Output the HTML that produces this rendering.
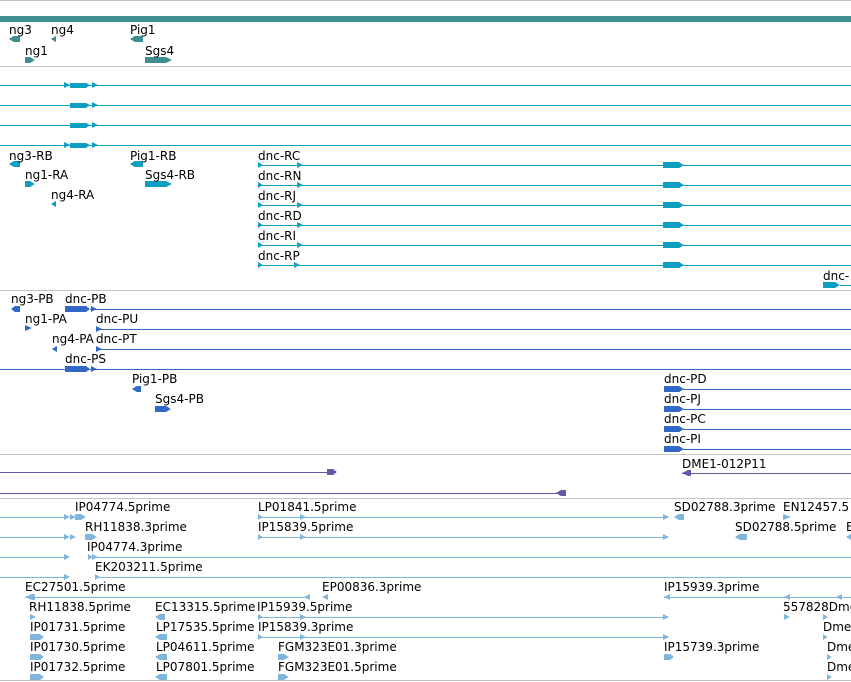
<!DOCTYPE html>
<html><head><meta charset="utf-8"><style>
html,body{margin:0;padding:0;background:#fff;width:851px;height:682px;overflow:hidden}
svg text{font-family:"DejaVu Sans","Liberation Sans",sans-serif;font-size:12px;fill:#000}
</style></head><body>
<svg width="851" height="682" viewBox="0 0 851 682" xmlns="http://www.w3.org/2000/svg" shape-rendering="crispEdges">
<g fill="#c4c4c4">
<rect x="0" y="0" width="851" height="1"/>
<rect x="0" y="66" width="851" height="1"/>
<rect x="0" y="290" width="851" height="1"/>
<rect x="0" y="454" width="851" height="1"/>
<rect x="0" y="498" width="851" height="1"/>
<rect x="0" y="680" width="851" height="1"/>
</g>
<rect x="0" y="16" width="851" height="6" fill="#3f8f90"/>

<g fill="#3f8e8f">
<polygon points="9,39 14,36 20,36 20,42 14,42"/>
<polygon points="51,39 56,36 56,42"/>
<polygon points="130,39 135,36 143,36 143,42 135,42"/>
<polygon points="25,57 30,57 35,60 30,63 25,63"/>
<polygon points="145,57 166,57 172,60 166,63 145,63"/>
</g>
<text x="9" y="34">ng3</text><text x="51" y="34">ng4</text><text x="130" y="34">Pig1</text>
<text x="25" y="55">ng1</text><text x="145" y="55">Sgs4</text>

<g fill="#0d9fc1">
<rect x="0" y="85" width="851" height="1"/><rect x="0" y="105" width="851" height="1"/>
<rect x="0" y="125" width="851" height="1"/><rect x="0" y="145" width="851" height="1"/>
<polygon points="64,82 70,85 64,88"/><polygon points="64,142 70,145 64,148"/>
<polygon points="70,83 86,83 90,85 86,88 70,88"/><polygon points="70,103 86,103 90,105 86,108 70,108"/>
<polygon points="70,123 86,123 90,125 86,128 70,128"/><polygon points="70,143 86,143 90,145 86,148 70,148"/>
<polygon points="92,82 98,85 92,88"/><polygon points="92,102 98,105 92,108"/>
<polygon points="92,122 98,125 92,128"/><polygon points="92,142 98,145 92,148"/>
<polygon points="9,164 14,161 20,161 20,167 14,167"/>
<polygon points="130,164 135,161 143,161 143,167 135,167"/>
<polygon points="25,181 30,181 35,184 30,187 25,187"/>
<polygon points="145,181 166,181 172,184 166,187 145,187"/>
<polygon points="51,204 56,201 56,207"/>
<rect x="258" y="165" width="593" height="1"/><rect x="258" y="185" width="593" height="1"/>
<rect x="258" y="205" width="593" height="1"/><rect x="258" y="225" width="593" height="1"/>
<rect x="258" y="245" width="593" height="1"/><rect x="258" y="265" width="593" height="1"/>
<polygon points="258,162 263,165 258,168"/><polygon points="297,162 303,165 297,168"/>
<polygon points="258,182 263,185 258,188"/><polygon points="297,182 303,185 297,188"/>
<polygon points="258,202 263,205 258,208"/><polygon points="297,202 303,205 297,208"/>
<polygon points="258,222 263,225 258,228"/><polygon points="297,222 303,225 297,228"/>
<polygon points="258,242 263,245 258,248"/><polygon points="297,242 303,245 297,248"/>
<polygon points="258,262 263,265 258,268"/><polygon points="294,262 300,265 294,268"/>
<polygon points="663,162 679,162 684,165 679,168 663,168"/><polygon points="663,182 679,182 684,185 679,188 663,188"/>
<polygon points="663,202 679,202 684,205 679,208 663,208"/><polygon points="663,222 679,222 684,225 679,228 663,228"/>
<polygon points="663,242 679,242 684,245 679,248 663,248"/><polygon points="663,262 679,262 684,265 679,268 663,268"/>
<polygon points="823,282 835,282 840,285 835,288 823,288"/><rect x="840" y="285" width="11" height="1"/>
</g>
<text x="9" y="160">ng3-RB</text><text x="130" y="160">Pig1-RB</text><text x="25" y="179">ng1-RA</text>
<text x="145" y="179">Sgs4-RB</text><text x="51" y="199">ng4-RA</text>
<text x="258" y="160">dnc-RC</text><text x="258" y="180">dnc-RN</text><text x="258" y="200">dnc-RJ</text>
<text x="258" y="220">dnc-RD</text><text x="258" y="240">dnc-RI</text><text x="258" y="260">dnc-RP</text>
<text x="823" y="280">dnc-</text>

<g fill="#3168c8">
<polygon points="11,309 15,306 20,306 20,312 15,312"/>
<polygon points="65,306 86,306 90,309 86,312 65,312"/><polygon points="91,306 97,309 91,312"/>
<rect x="90" y="309" width="761" height="1"/>
<polygon points="25,325 32,328 25,331"/>
<polygon points="96,326 102,329 96,332"/><rect x="96" y="329" width="755" height="1"/>
<polygon points="52,349 57,346 57,352"/>
<polygon points="96,346 102,349 96,352"/><rect x="96" y="349" width="755" height="1"/>
<polygon points="65,366 86,366 90,369 86,372 65,372"/><polygon points="91,366 97,369 91,372"/>
<rect x="0" y="369" width="851" height="1"/>
<polygon points="132,389 137,386 141,386 141,392 137,392"/>
<polygon points="155,406 166,406 171,409 166,412 155,412"/>
<polygon points="664,386 679,386 684,389 679,392 664,392"/><rect x="683" y="389" width="168" height="1"/>
<polygon points="664,406 679,406 684,409 679,412 664,412"/><rect x="683" y="409" width="168" height="1"/>
<polygon points="664,426 679,426 684,429 679,432 664,432"/><rect x="683" y="429" width="168" height="1"/>
<polygon points="664,446 679,446 684,449 679,452 664,452"/><rect x="683" y="449" width="168" height="1"/>
</g>
<text x="11" y="303">ng3-PB</text><text x="65" y="303">dnc-PB</text><text x="25" y="323">ng1-PA</text>
<text x="96" y="323">dnc-PU</text><text x="52" y="343">ng4-PA</text><text x="96" y="343">dnc-PT</text>
<text x="65" y="363">dnc-PS</text><text x="132" y="383">Pig1-PB</text><text x="155" y="403">Sgs4-PB</text>
<text x="664" y="383">dnc-PD</text><text x="664" y="403">dnc-PJ</text><text x="664" y="423">dnc-PC</text><text x="664" y="443">dnc-PI</text>

<g fill="#6b55a5">
<rect x="0" y="472" width="330" height="1"/><polygon points="327,469 333,469 337,472 333,475 327,475"/>
<rect x="0" y="493" width="565" height="1"/><polygon points="556,493 561,490 566,490 566,496 561,496"/>
<rect x="682" y="473" width="169" height="1"/><polygon points="682,473 688,470 691,470 691,476 688,476"/>
</g>
<text x="682" y="468">DME1-012P11</text>

<g fill="#80b5dc">
<rect x="0" y="517" width="68" height="1"/><polygon points="64,514 70,517 64,520"/><polygon points="70,514 76,517 70,520"/>
<polygon points="75,514 81,514 86,517 81,520 75,520"/>
<rect x="0" y="537" width="68" height="1"/><polygon points="64,534 70,537 64,540"/><polygon points="70,534 76,537 70,540"/>
<polygon points="85,534 92,534 97,537 92,540 85,540"/>
<rect x="0" y="557" width="68" height="1"/><polygon points="64,554 70,557 64,560"/>
<polygon points="88,554 93,557 88,560"/><polygon points="92,554 98,557 92,560"/><rect x="88" y="557" width="763" height="1"/>
<rect x="0" y="577" width="68" height="1"/><polygon points="64,574 70,577 64,580"/>
<polygon points="95,574 100,577 95,580"/><rect x="95" y="577" width="756" height="1"/>
<rect x="258" y="517" width="410" height="1"/><polygon points="258,514 263,517 258,520"/><polygon points="300,514 306,517 300,520"/><polygon points="663,514 669,517 663,520"/>
<rect x="258" y="537" width="410" height="1"/><polygon points="258,534 263,537 258,540"/><polygon points="300,534 306,537 300,540"/><polygon points="663,534 669,537 663,540"/>
<polygon points="674,517 679,514 684,514 684,520 679,520"/>
<polygon points="783,514 791,517 783,520"/>
<polygon points="735,537 740,534 747,534 747,540 740,540"/>
<polygon points="846,537 851,534 851,540"/>
<rect x="25" y="597" width="285" height="1"/><polygon points="25,597 32,594 35,594 35,600 32,600"/><polygon points="304,597 310,594 310,600"/>
<polygon points="322,597 328,594 328,600"/>
<rect x="664" y="597" width="187" height="1"/><polygon points="664,597 670,594 670,600"/><polygon points="784,597 790,594 790,600"/><polygon points="836,597 842,594 842,600"/>
<polygon points="30,614 36,617 30,620"/>
<polygon points="155,617 160,614 165,614 165,620 160,620"/>
<rect x="258" y="617" width="410" height="1"/><polygon points="258,614 263,617 258,620"/><polygon points="300,614 306,617 300,620"/><polygon points="663,614 669,617 663,620"/>
<polygon points="784,614 790,617 784,620"/><polygon points="823,614 828,617 823,620"/>
<polygon points="30,634 40,634 44,637 40,640 30,640"/>
<polygon points="155,637 160,634 167,634 167,640 160,640"/>
<rect x="258" y="637" width="410" height="1"/><polygon points="258,634 263,637 258,640"/><polygon points="300,634 306,637 300,640"/><polygon points="663,634 669,637 663,640"/>
<polygon points="823,634 828,637 823,640"/>
<polygon points="30,654 40,654 44,657 40,660 30,660"/>
<polygon points="155,657 160,654 167,654 167,660 160,660"/>
<polygon points="278,654 284,654 289,657 284,660 278,660"/>
<polygon points="664,654 670,654 674,657 670,660 664,660"/>
<polygon points="827,654 832,657 827,660"/>
<polygon points="30,674 40,674 44,677 40,680 30,680"/>
<polygon points="155,677 160,674 167,674 167,680 160,680"/>
<polygon points="278,674 284,674 289,677 284,680 278,680"/>
<polygon points="827,674 832,677 827,680"/>
</g>
<text x="75" y="511">IP04774.5prime</text><text x="258" y="511">LP01841.5prime</text>
<text x="674" y="511">SD02788.3prime</text><text x="783" y="511">EN12457.5</text>
<text x="85" y="531">RH11838.3prime</text><text x="258" y="531">IP15839.5prime</text>
<text x="735" y="531">SD02788.5prime</text><text x="846" y="531">E</text>
<text x="87" y="551">IP04774.3prime</text>
<text x="95" y="571">EK203211.5prime</text>
<text x="25" y="591">EC27501.5prime</text><text x="322" y="591">EP00836.3prime</text><text x="664" y="591">IP15939.3prime</text>
<text x="29" y="611">RH11838.5prime</text><text x="155" y="611">EC13315.5prime</text><text x="257" y="611">IP15939.5prime</text><text x="783" y="611">557828Dme</text>
<text x="30" y="631">IP01731.5prime</text><text x="156" y="631">LP17535.5prime</text><text x="258" y="631">IP15839.3prime</text><text x="823" y="631">Dme</text>
<text x="30" y="651">IP01730.5prime</text><text x="156" y="651">LP04611.5prime</text><text x="278" y="651">FGM323E01.3prime</text><text x="664" y="651">IP15739.3prime</text><text x="827" y="651">Dme</text>
<text x="30" y="671">IP01732.5prime</text><text x="156" y="671">LP07801.5prime</text><text x="278" y="671">FGM323E01.5prime</text><text x="827" y="671">Dme</text>
</svg>
</body></html>
